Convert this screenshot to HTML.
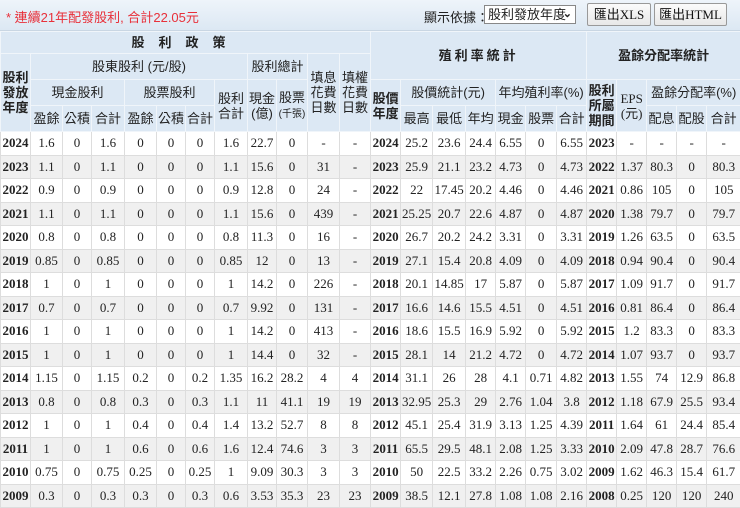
<!DOCTYPE html>
<html><head><meta charset="utf-8"><style>
body{margin:0;width:740px;height:508px;overflow:hidden;background:#fff;font-family:"Liberation Sans","Noto Sans CJK TC",sans-serif;}
.top{height:31px;background:linear-gradient(#eef4fa,#dce8f3);position:relative;border-bottom:1px solid #c9d6e3;box-sizing:border-box}
.top .t{position:absolute;left:6px;top:7px;color:#e8303a;font-size:13px}
.top .s{position:absolute;left:424px;top:7px;font-size:13px;color:#222}
.sel{position:absolute;left:484px;top:5px;width:92px;height:19px;border:1px solid #888;background:#fff;font-size:13px;box-sizing:border-box;padding-left:3px;line-height:17px;color:#222;white-space:nowrap;overflow:hidden}
.sel i{position:absolute;right:3px;top:0;font-style:normal;font-size:11px;font-weight:bold}
.btn{position:absolute;top:3px;height:23px;border:1px solid #999;background:linear-gradient(#fbfbfb,#e8e8e8);font-family:"Liberation Serif","Noto Sans CJK TC",serif;font-size:13px;line-height:21px;text-align:center;box-sizing:border-box;border-radius:2px;color:#111}
table{border-collapse:collapse;table-layout:fixed;width:740px;}
td{padding:0;text-align:center;overflow:hidden;white-space:nowrap}
thead td{background:#dce8f4;border:1px solid #f0f5fa;font-size:13px;color:#222;line-height:15px}
tbody td{border:1px solid #ddd;font-family:"Liberation Serif",serif;font-size:13px;color:#222;height:22.5px}
tbody tr:nth-child(even) td{background:#f0f0f0}
tbody td.y{font-weight:bold}
.b{font-weight:bold}
small{font-size:10px}
</style></head><body>
<div class="top"><span class="t">* 連續21年配發股利, 合計22.05元</span><span class="s">顯示依據：</span><div class="sel">股利發放年度<i>&#8964;</i></div><div class="btn" style="left:587px;width:64px">匯出XLS</div><div class="btn" style="left:654px;width:73px">匯出HTML</div></div>
<table>
<colgroup><col style="width:30px"><col style="width:32px"><col style="width:29px"><col style="width:33px"><col style="width:32px"><col style="width:29px"><col style="width:29px"><col style="width:33px"><col style="width:29px"><col style="width:31px"><col style="width:32px"><col style="width:31px"><col style="width:30px"><col style="width:32px"><col style="width:33px"><col style="width:30px"><col style="width:30px"><col style="width:31px"><col style="width:30px"><col style="width:30px"><col style="width:30px"><col style="width:30px"><col style="width:30px"><col style="width:34px"></colgroup>
<thead>
<tr style="height:22px"><td colspan="12" class="b" style="letter-spacing:14px">股利政策</td><td colspan="7" rowspan="2" class="b" style="letter-spacing:3px">殖利率統計</td><td colspan="5" rowspan="2" class="b">盈餘分配率統計</td></tr>
<tr style="height:26px"><td rowspan="3" class="b">股利<br>發放<br>年度</td><td colspan="7">股東股利 (元/股)</td><td colspan="2">股利總計</td><td rowspan="3">填息<br>花費<br>日數</td><td rowspan="3">填權<br>花費<br>日數</td></tr>
<tr style="height:26px"><td colspan="3">現金股利</td><td colspan="3">股票股利</td><td rowspan="2">股利<br>合計</td><td rowspan="2">現金<br>(億)</td><td rowspan="2">股票<br><small>(千張)</small></td><td rowspan="2" class="b">股價<br>年度</td><td colspan="3">股價統計(元)</td><td colspan="3">年均殖利率(%)</td><td rowspan="2" class="b">股利<br>所屬<br>期間</td><td rowspan="2" style="font-family:'Liberation Serif','Noto Sans CJK TC',serif">EPS<br>(元)</td><td colspan="3">盈餘分配率(%)</td></tr>
<tr style="height:26px"><td>盈餘</td><td>公積</td><td>合計</td><td>盈餘</td><td>公積</td><td>合計</td><td>最高</td><td>最低</td><td>年均</td><td>現金</td><td>股票</td><td>合計</td><td>配息</td><td>配股</td><td>合計</td></tr>
</thead>
<tbody>
<tr><td class="y">2024</td><td>1.6</td><td>0</td><td>1.6</td><td>0</td><td>0</td><td>0</td><td>1.6</td><td>22.7</td><td>0</td><td>-</td><td>-</td><td class="y">2024</td><td>25.2</td><td>23.6</td><td>24.4</td><td>6.55</td><td>0</td><td>6.55</td><td class="y">2023</td><td>-</td><td>-</td><td>-</td><td>-</td></tr>
<tr><td class="y">2023</td><td>1.1</td><td>0</td><td>1.1</td><td>0</td><td>0</td><td>0</td><td>1.1</td><td>15.6</td><td>0</td><td>31</td><td>-</td><td class="y">2023</td><td>25.9</td><td>21.1</td><td>23.2</td><td>4.73</td><td>0</td><td>4.73</td><td class="y">2022</td><td>1.37</td><td>80.3</td><td>0</td><td>80.3</td></tr>
<tr><td class="y">2022</td><td>0.9</td><td>0</td><td>0.9</td><td>0</td><td>0</td><td>0</td><td>0.9</td><td>12.8</td><td>0</td><td>24</td><td>-</td><td class="y">2022</td><td>22</td><td>17.45</td><td>20.2</td><td>4.46</td><td>0</td><td>4.46</td><td class="y">2021</td><td>0.86</td><td>105</td><td>0</td><td>105</td></tr>
<tr><td class="y">2021</td><td>1.1</td><td>0</td><td>1.1</td><td>0</td><td>0</td><td>0</td><td>1.1</td><td>15.6</td><td>0</td><td>439</td><td>-</td><td class="y">2021</td><td>25.25</td><td>20.7</td><td>22.6</td><td>4.87</td><td>0</td><td>4.87</td><td class="y">2020</td><td>1.38</td><td>79.7</td><td>0</td><td>79.7</td></tr>
<tr><td class="y">2020</td><td>0.8</td><td>0</td><td>0.8</td><td>0</td><td>0</td><td>0</td><td>0.8</td><td>11.3</td><td>0</td><td>16</td><td>-</td><td class="y">2020</td><td>26.7</td><td>20.2</td><td>24.2</td><td>3.31</td><td>0</td><td>3.31</td><td class="y">2019</td><td>1.26</td><td>63.5</td><td>0</td><td>63.5</td></tr>
<tr><td class="y">2019</td><td>0.85</td><td>0</td><td>0.85</td><td>0</td><td>0</td><td>0</td><td>0.85</td><td>12</td><td>0</td><td>13</td><td>-</td><td class="y">2019</td><td>27.1</td><td>15.4</td><td>20.8</td><td>4.09</td><td>0</td><td>4.09</td><td class="y">2018</td><td>0.94</td><td>90.4</td><td>0</td><td>90.4</td></tr>
<tr><td class="y">2018</td><td>1</td><td>0</td><td>1</td><td>0</td><td>0</td><td>0</td><td>1</td><td>14.2</td><td>0</td><td>226</td><td>-</td><td class="y">2018</td><td>20.1</td><td>14.85</td><td>17</td><td>5.87</td><td>0</td><td>5.87</td><td class="y">2017</td><td>1.09</td><td>91.7</td><td>0</td><td>91.7</td></tr>
<tr><td class="y">2017</td><td>0.7</td><td>0</td><td>0.7</td><td>0</td><td>0</td><td>0</td><td>0.7</td><td>9.92</td><td>0</td><td>131</td><td>-</td><td class="y">2017</td><td>16.6</td><td>14.6</td><td>15.5</td><td>4.51</td><td>0</td><td>4.51</td><td class="y">2016</td><td>0.81</td><td>86.4</td><td>0</td><td>86.4</td></tr>
<tr><td class="y">2016</td><td>1</td><td>0</td><td>1</td><td>0</td><td>0</td><td>0</td><td>1</td><td>14.2</td><td>0</td><td>413</td><td>-</td><td class="y">2016</td><td>18.6</td><td>15.5</td><td>16.9</td><td>5.92</td><td>0</td><td>5.92</td><td class="y">2015</td><td>1.2</td><td>83.3</td><td>0</td><td>83.3</td></tr>
<tr><td class="y">2015</td><td>1</td><td>0</td><td>1</td><td>0</td><td>0</td><td>0</td><td>1</td><td>14.4</td><td>0</td><td>32</td><td>-</td><td class="y">2015</td><td>28.1</td><td>14</td><td>21.2</td><td>4.72</td><td>0</td><td>4.72</td><td class="y">2014</td><td>1.07</td><td>93.7</td><td>0</td><td>93.7</td></tr>
<tr><td class="y">2014</td><td>1.15</td><td>0</td><td>1.15</td><td>0.2</td><td>0</td><td>0.2</td><td>1.35</td><td>16.2</td><td>28.2</td><td>4</td><td>4</td><td class="y">2014</td><td>31.1</td><td>26</td><td>28</td><td>4.1</td><td>0.71</td><td>4.82</td><td class="y">2013</td><td>1.55</td><td>74</td><td>12.9</td><td>86.8</td></tr>
<tr><td class="y">2013</td><td>0.8</td><td>0</td><td>0.8</td><td>0.3</td><td>0</td><td>0.3</td><td>1.1</td><td>11</td><td>41.1</td><td>19</td><td>19</td><td class="y">2013</td><td>32.95</td><td>25.3</td><td>29</td><td>2.76</td><td>1.04</td><td>3.8</td><td class="y">2012</td><td>1.18</td><td>67.9</td><td>25.5</td><td>93.4</td></tr>
<tr><td class="y">2012</td><td>1</td><td>0</td><td>1</td><td>0.4</td><td>0</td><td>0.4</td><td>1.4</td><td>13.2</td><td>52.7</td><td>8</td><td>8</td><td class="y">2012</td><td>45.1</td><td>25.4</td><td>31.9</td><td>3.13</td><td>1.25</td><td>4.39</td><td class="y">2011</td><td>1.64</td><td>61</td><td>24.4</td><td>85.4</td></tr>
<tr><td class="y">2011</td><td>1</td><td>0</td><td>1</td><td>0.6</td><td>0</td><td>0.6</td><td>1.6</td><td>12.4</td><td>74.6</td><td>3</td><td>3</td><td class="y">2011</td><td>65.5</td><td>29.5</td><td>48.1</td><td>2.08</td><td>1.25</td><td>3.33</td><td class="y">2010</td><td>2.09</td><td>47.8</td><td>28.7</td><td>76.6</td></tr>
<tr><td class="y">2010</td><td>0.75</td><td>0</td><td>0.75</td><td>0.25</td><td>0</td><td>0.25</td><td>1</td><td>9.09</td><td>30.3</td><td>3</td><td>3</td><td class="y">2010</td><td>50</td><td>22.5</td><td>33.2</td><td>2.26</td><td>0.75</td><td>3.02</td><td class="y">2009</td><td>1.62</td><td>46.3</td><td>15.4</td><td>61.7</td></tr>
<tr><td class="y">2009</td><td>0.3</td><td>0</td><td>0.3</td><td>0.3</td><td>0</td><td>0.3</td><td>0.6</td><td>3.53</td><td>35.3</td><td>23</td><td>23</td><td class="y">2009</td><td>38.5</td><td>12.1</td><td>27.8</td><td>1.08</td><td>1.08</td><td>2.16</td><td class="y">2008</td><td>0.25</td><td>120</td><td>120</td><td>240</td></tr>
</tbody></table>
</body></html>
